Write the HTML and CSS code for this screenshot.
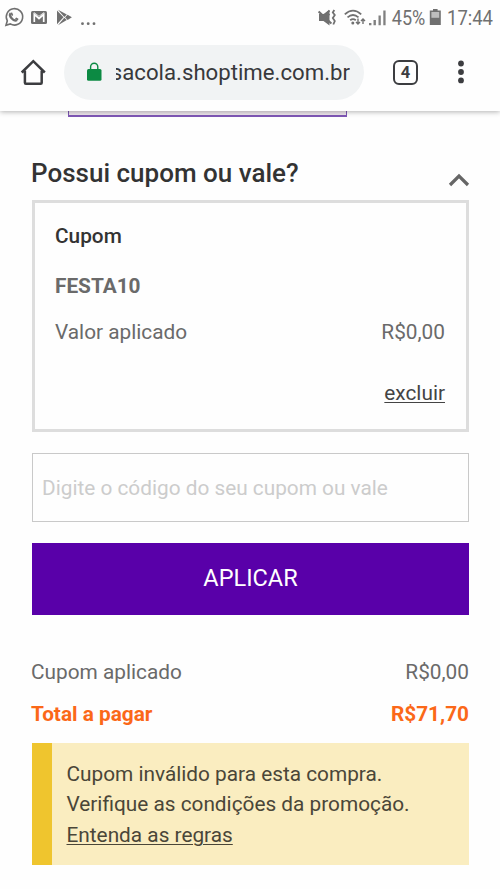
FILE: index.html
```
<!DOCTYPE html>
<html lang="pt-BR">
<head>
<meta charset="utf-8">
<title>Shoptime - Sacola</title>
<link rel="stylesheet" href="styles.css">
</head>
<body>
<header class="browser">
  <div class="status">
    <svg class="status-left" viewBox="0 0 100 36" width="100" height="36">
      <g fill="none" stroke="#707070">
        <path d="M6 25.200l1.300-4.400A8.200 8.200 0 1 1 10.300 23.900Z" stroke-width="1.600"/>
        <path d="M10.600 13.200c-1.200 1.300-.5 3.300 1 5s3.700 3 5.300 1.800" stroke-width="2.300"/>
      </g>
      <path d="M10.400 12.800l1.700-.4 1.100 2.600-1.200 1.200zM15 18.700l1.200-1.100 2.300 1.200-.6 1.700z" fill="#707070"/>
      <rect x="31" y="11" width="16" height="13" rx="1.500" fill="#707070"/>
      <path d="M34.300 21.900V14.300l4.700 4.200 4.700-4.200v7.600" fill="none" stroke="#fff" stroke-width="1.700"/>
      <path d="M34 12.500l5 3.800 5-3.800" fill="none" stroke="#fff" stroke-width=".8"/>
      <g fill="#707070"><path d="M57 10.500v13.800l6.500-7zM58 9.800l8.800 4.800-2.500 2.300zM58 25.200l8.800-5.200-2.500-2.300zM67.600 14.800l4.300 2.500-4.300 2.600-2.500-2.600z"/>
      <circle cx="82.500" cy="23.700" r="1.400"/><circle cx="88.200" cy="23.700" r="1.400"/><circle cx="94" cy="23.700" r="1.400"/></g>
    </svg>
    <svg class="status-right" viewBox="316 0 184 36" width="184" height="36">
      <path d="M319 14h4.500l6-4v15.500l-6-4.500H319z" fill="#707070"/>
      <g fill="none" stroke="#707070" stroke-width="1.800">
        <path d="M318.600 11.500l12.800 12" stroke-width="2"/>
        <path d="M329.500 10.500l-2.500 2.300 2.500 2.300M334.300 10l-1.500 2.500 2 2.500-2 3 2 3-1.500 3.500"/>
        <path d="M344.800 14.300q8.200-7.300 16.400 0M347.500 17.400q5.500-4.800 11 0M350.200 20.300q2.800-2.400 5.600 0"/>
        <path d="M358 18.500v5.500M356 22l2 2 2-2M363 24v-5M361 21l2-2 2 2" stroke-width="1.400"/>
      </g>
      <circle cx="352.800" cy="23" r="1.500" fill="#707070"/>
      <path d="M369 23h2.400v2.300H369zM373.500 20h2.400v5.300h-2.400zM378.500 15.500h2.300v9.800h-2.300zM383.300 10.500h2.300v14.800h-2.300z" fill="#808080"/>
      <text class="status-text" x="391.800" y="25" textLength="33.500" lengthAdjust="spacingAndGlyphs">45%</text>
      <path d="M433 9h4.600v1.500h3.200V25h-11V10.500h3.200z" fill="#707070"/>
      <path d="M431.400 12h7.800v5.800h-7.800z" fill="#bdbdbd"/>
      <text class="status-text" x="447" y="25" textLength="46" lengthAdjust="spacingAndGlyphs">17:44</text>
    </svg>
  </div>
  <div class="toolbar">
    <svg class="home" viewBox="0 0 26 26" width="26" height="26"><path d="M1.700 13.500L13.300 2.200l11.500 11.300M4.900 11.700v12q0 1 1 1h14.800q1 0 1-1v-12" fill="none" stroke="#3c3d40" stroke-width="2.500"/></svg>
    <div class="address">
      <svg class="lock" viewBox="0 0 16 20" width="16" height="20"><rect x="1" y="7" width="14.500" height="11.700" rx="1.500" fill="#0c8a43"/><path d="M4.600 8V4.800a3.600 3.600 0 0 1 7.200 0V8" fill="none" stroke="#0c8a43" stroke-width="1.400"/></svg>
      <div class="url-clip"><span class="url">sacola.shoptime.com.br</span></div>
    </div>
    <div class="tabs">4</div>
    <svg class="more" viewBox="0 0 6 24" width="6" height="24"><g fill="#3c3d40"><circle cx="3" cy="3.500" r="2.900"/><circle cx="3" cy="12" r="2.900"/><circle cx="3" cy="20.400" r="2.900"/></g></svg>
  </div>
</header>
<main>
  <div class="previous"></div>
  <div class="heading">
    <h1>Possui cupom ou vale?</h1>
    <svg viewBox="0 0 22 14" width="22" height="14"><path d="M2 12l9-9 9 9" fill="none" stroke="#666" stroke-width="3.200"/></svg>
  </div>
  <section class="card">
    <h2>Cupom</h2>
    <strong class="code">FESTA10</strong>
    <div class="row applied"><span>Valor aplicado</span><span>R$0,00</span></div>
    <a class="remove">excluir</a>
  </section>
  <input class="field" placeholder="Digite o código do seu cupom ou vale" aria-label="Cupom ou vale">
  <button class="apply">APLICAR</button>
  <div class="row coupon"><span>Cupom aplicado</span><span>R$0,00</span></div>
  <div class="row total"><span>Total a pagar</span><span>R$71,70</span></div>
  <aside class="warning">
    <p>Cupom inválido para esta compra.<br>Verifique as condições da promoção.<br><a>Entenda as regras</a></p>
  </aside>
</main>
</body>
</html>
```
FILE: styles.css
```
* { box-sizing: border-box; }
body { margin: 0; width: 500px; height: 889px; overflow: hidden; background: #fefefe; color: #6a6a6a; font: 20.8px/30.6px Roboto, sans-serif; letter-spacing: 0; }
svg { display: block; flex: none; }
.browser { position: relative; z-index: 1; height: 111px; background: #fefefe; box-shadow: 0 1px 5px rgba(0,0,0,.3); }
.status { display: flex; justify-content: space-between; height: 36px; }
.status-text { font-size: 21px; fill: #707070; }
.toolbar { display: flex; align-items: center; height: 72px; padding-left: 20px; }
.address { display: flex; align-items: center; width: 300px; height: 55px; margin-left: 18px; padding-left: 22px; border-radius: 28px; background: #f1f3f4; }
.url-clip { display: flex; justify-content: flex-end; width: 234px; margin-left: 14px; overflow: hidden; }
.url { color: #38393c; font-size: 22.2px; white-space: nowrap; }
.lock { margin-top: -1px; }
.tabs { width: 25px; height: 25px; margin-left: 29px; border: 2.500px solid #3c3d40; border-radius: 6px; color: #3c3d40; font-size: 16.500px; font-weight: 700; line-height: 21px; text-align: center; }
.more { margin-left: 40px; }
main { padding: 0 31px 0 32px; }
.previous { width: 279px; height: 6px; margin-left: 36px; border: solid #7e57b5; border-width: 0 1.500px 2px; background: #eee6ed; }
.heading { display: flex; justify-content: space-between; height: 83px; padding-top: 41px; }
h1 { margin: 0 0 0 -1px; color: #333; font-size: 26px; font-weight: 500; line-height: 30px; }
.heading svg { margin: 15px -1px 0 0; }
.card { display: flex; flex-direction: column; height: 232px; padding: 18px 21px 0 20px; border: 3px solid #ddd; }
h2 { margin: 0; color: #333; font-size: 20.8px; font-weight: 500; line-height: 30px; }
.code { margin-top: 20px; line-height: 30px; }
.row { display: flex; justify-content: space-between; }
.applied { margin-top: 16px; line-height: 30px; }
.remove { align-self: flex-end; margin-top: 31px; color: #444; line-height: 30px; }
.remove, .warning a { text-decoration: underline; text-decoration-thickness: 1.400px; text-underline-offset: 2px; }
.field { display: block; width: 100%; height: 69px; margin-top: 21px; padding: 0 9px; border: 1px solid #c9c9c9; background: transparent; font: inherit; }
.field::placeholder { color: #ccc; opacity: 1; }
.apply { display: block; width: 100%; height: 72px; margin-top: 21px; padding: 0 0 2px; border: 0; background: #5900a9; color: #fff; font: 23.500px Roboto, sans-serif; }
.coupon, .total { margin-left: -1px; }
.coupon { margin-top: 42px; }
.total { margin-top: 11px; color: #fb6818; font-weight: 700; }
.warning { height: 122px; margin-top: 14px; padding: 15.600px 0 0 14.500px; border-left: 20px solid #efc52e; background: #faedc0; color: #4a4638; }
.warning p { margin: 0; }
```
